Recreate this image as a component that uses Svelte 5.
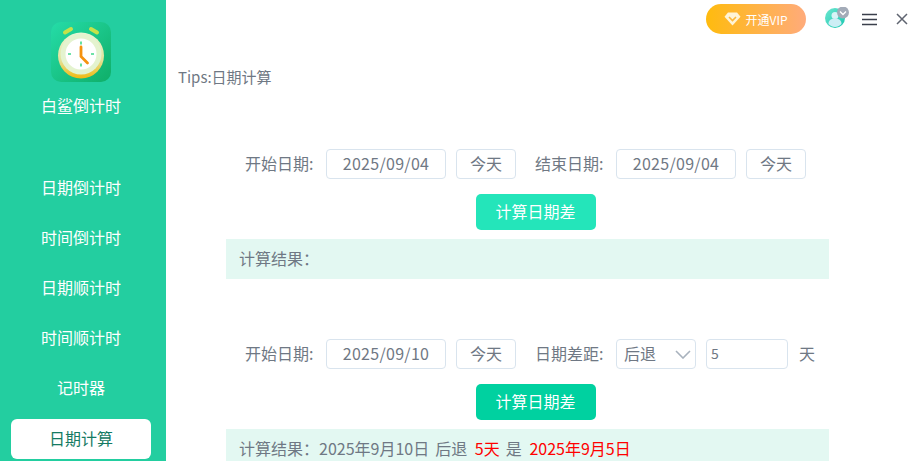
<script>
  const navItems = ['日期倒计时', '时间倒计时', '日期顺计时', '时间顺计时', '记时器', '日期计算'];
  let active = '日期计算';
</script>

<div class="app">
  <aside class="sidebar">
    <div class="logo">
      <svg width="60" height="60" viewBox="0 0 60 60">
        <defs>
          <linearGradient id="bg" x1="0" y1="0" x2="1" y2="1">
            <stop offset="0" stop-color="#25dca8" />
            <stop offset="1" stop-color="#0fae68" />
          </linearGradient>
          <linearGradient id="rim" x1="0" y1="0" x2="0" y2="1">
            <stop offset="0" stop-color="#e9f6d6" />
            <stop offset="0.6" stop-color="#e2e29a" />
            <stop offset="1" stop-color="#f2b90f" />
          </linearGradient>
        </defs>
        <rect width="60" height="60" rx="10" fill="url(#bg)" />
        <path d="M14 10.5l6-3.500M46 10.500l-6-3.500" stroke="#c5e24a" stroke-width="4" stroke-linecap="round" />
        <circle cx="30" cy="33.500" r="23" fill="url(#rim)" />
        <circle cx="30" cy="32" r="20.500" fill="#e4f3cf" />
        <circle cx="30" cy="32" r="15.500" fill="#fff" />
        <path d="M30 19.500v3M30 41.500v3M17 32h3M40 32h3" stroke="#3fd98a" stroke-width="1.600" />
        <path d="M30 25v9.500l6.500 6.500" fill="none" stroke="#f5920f" stroke-width="2.800" stroke-linecap="round" />
      </svg>
    </div>
    <div class="app-name">白鲨倒计时</div>
    <nav class="nav">
      {#each navItems as item}
        <div class="nav-item" class:active={item === active}>{item}</div>
      {/each}
    </nav>
  </aside>

  <main class="main">
    <header class="topbar">
      <div class="vip">
        <svg width="17" height="14" viewBox="0 0 17 14">
          <path d="M4 0.500h9l3.500 4.200L8.500 13.500 0.500 4.700z" fill="#fff4d6" />
          <path d="M5 5l3.500 3.500L12 5" fill="none" stroke="#fdb83a" stroke-width="1.600" />
        </svg>
        <span>开通VIP</span>
      </div>
      <div class="avatar">
        <svg width="24" height="22" viewBox="0 0 24 22">
          <defs>
            <linearGradient id="av" x1="0" y1="0" x2="1" y2="1">
              <stop offset="0" stop-color="#6ee7d0" />
              <stop offset="1" stop-color="#18c7b0" />
            </linearGradient>
          </defs>
          <circle cx="10" cy="11" r="10" fill="url(#av)" />
          <circle cx="10" cy="8.500" r="3.500" fill="#d8f4f6" />
          <path d="M3.500 17c0-4 3-5.500 6.500-5.500s6.500 1.500 6.500 5.500c-2 2-4 3-6.500 3s-4.500-1-6.500-3z" fill="#cdeef5" />
          <circle cx="18" cy="5.500" r="6" fill="#a3abb8" />
          <path d="M15 4.500l3 3 3-3" fill="none" stroke="#fff" stroke-width="1.300" />
        </svg>
      </div>
      <svg class="menu" width="15" height="13" viewBox="0 0 15 13">
        <path d="M0 1.500h15M0 6.500h15M0 11.500h15" stroke="#3a3f4b" stroke-width="1.600" />
      </svg>
      <svg class="close" width="12" height="12" viewBox="0 0 12 12">
        <path d="M1 1l10 10M11 1L1 11" stroke="#5f6470" stroke-width="1.500" />
      </svg>
    </header>

    <p class="tips">Tips:日期计算</p>

    <section class="calc first">
      <div class="row">
        <span class="label">开始日期:</span>
        <div class="field date">2025/09/04</div>
        <div class="field today">今天</div>
        <span class="label second">结束日期:</span>
        <div class="field date">2025/09/04</div>
        <div class="field today">今天</div>
      </div>
      <button class="submit light">计算日期差</button>
      <div class="result">计算结果：</div>
    </section>

    <section class="calc">
      <div class="row">
        <span class="label">开始日期:</span>
        <div class="field date">2025/09/10</div>
        <div class="field today">今天</div>
        <span class="label second shifted">日期差距:</span>
        <div class="field select">
          <span>后退</span>
          <svg width="16" height="9" viewBox="0 0 16 9">
            <path d="M1 1l7 7 7-7" fill="none" stroke="#a8b2bd" stroke-width="1.600" />
          </svg>
        </div>
        <div class="field num">5</div>
        <span class="unit">天</span>
      </div>
      <button class="submit">计算日期差</button>
      <div class="result">
        计算结果：2025年9月10日 后退 <span class="red">5天</span> 是 <span class="red">2025年9月5日</span>
      </div>
    </section>
  </main>
</div>

<style>
  :global(body) {
    margin: 0;
    background: #fff;
  }

  .app {
    display: flex;
    width: 922px;
    height: 461px;
    overflow: hidden;
    font-family: "Noto Sans CJK SC", "Noto Sans", sans-serif;
    font-size: 16px;
    color: #6f7884;
  }

  .sidebar {
    width: 166px;
    flex-shrink: 0;
    background: #23cea0;
    display: flex;
    flex-direction: column;
    align-items: center;
    color: #fff;
  }

  .logo {
    margin: 22px 4px 0 0;
    height: 60px;
  }

  .app-name {
    margin: 11px 4px 0 0;
    line-height: 24px;
    font-size: 16px;
  }

  .nav {
    margin-top: 51px;
    width: 140px;
    margin-right: 4px;
    display: flex;
    flex-direction: column;
    gap: 10px;
  }

  .nav-item {
    height: 40px;
    line-height: 38px;
    text-align: center;
    border-radius: 6px;
  }

  .nav-item.active {
    margin-top: 1px;
    background: #fff;
    color: #147a63;
  }

  .main {
    flex: 1;
    min-width: 0;
  }

  .topbar {
    height: 38px;
    display: flex;
    align-items: flex-start;
  }

  .vip {
    margin: 4px 0 0 540px;
    width: 100px;
    height: 30px;
    border-radius: 15px;
    background: linear-gradient(90deg, #ffbb0e, #ffab7b);
    color: #fff;
    font-size: 12px;
    display: flex;
    align-items: center;
    justify-content: center;
    gap: 4px;
  }

  .avatar {
    margin: 7px 0 0 19px;
    height: 22px;
  }

  .menu {
    margin: 13px 0 0 13px;
  }

  .close {
    margin: 13px 0 0 19px;
  }

  .tips {
    margin: 29px 0 0 12px;
    font-size: 15px;
    line-height: 20px;
  }

  .calc {
    width: 603px;
    margin: 60px 0 0 60px;
    display: flex;
    flex-direction: column;
    align-items: center;
  }

  .calc.first {
    margin-top: 62px;
  }

  .row {
    align-self: stretch;
    height: 30px;
    padding-left: 19px;
    display: flex;
    align-items: center;
    gap: 10px;
    white-space: nowrap;
  }

  .label {
    width: 68px;
    margin-right: 3px;
    padding-bottom: 2px;
  }

  .label.second {
    margin-left: 9px;
  }

  .label.shifted {
    margin-left: 9px;
    margin-right: 3px;
  }

  .field {
    height: 30px;
    box-sizing: border-box;
    border: 1px solid #d9e4ee;
    border-radius: 4px;
    padding-bottom: 2px;
    display: flex;
    align-items: center;
    justify-content: center;
  }

  .date {
    width: 120px;
    letter-spacing: 0.3px;
  }

  .today {
    width: 60px;
  }

  .select {
    width: 80px;
    padding: 0 4px 2px 7px;
    justify-content: space-between;
  }

  .select svg {
    margin-top: 2px;
  }

  .num {
    width: 82px;
    padding-left: 4px;
    justify-content: flex-start;
    font-size: 14px;
  }

  .unit {
    margin-left: 1px;
    padding-bottom: 2px;
  }

  .submit {
    margin: 15px 0 0 16px;
    width: 120px;
    height: 36px;
    border: 0;
    border-radius: 5px;
    background: #00d1a0;
    color: #fff;
    font: inherit;
    padding: 0 0 2px;
  }

  .submit.light {
    background: #24e5ba;
  }

  .result {
    align-self: stretch;
    margin-top: 9px;
    height: 40px;
    line-height: 38px;
    padding-left: 13px;
    background: #e3f8f2;
    word-spacing: 2.500px;
  }

  .red {
    margin-left: 1.500px;
    color: #f00;
  }
</style>
